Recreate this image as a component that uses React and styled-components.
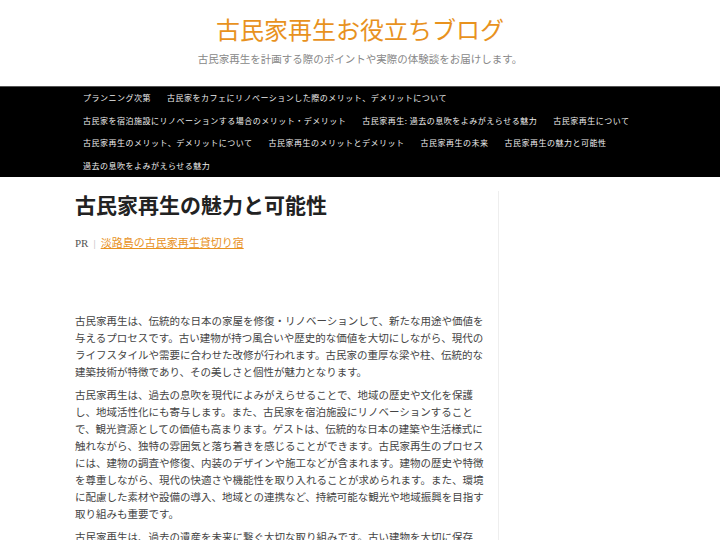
import React from 'react';
import styled, { createGlobalStyle } from 'styled-components';

const GlobalStyle = createGlobalStyle`
  html, body {
    margin: 0;
    padding: 0;
    background: #fff;
  }
  body {
    font-family: "Noto Sans CJK JP", "Noto Sans", sans-serif;
    color: #444;
  }
`;

const Header = styled.header`
  text-align: center;
  padding: 14px 0 20px;
`;

const SiteTitle = styled.div`
  font-size: 24px;
  line-height: 30px;
  color: #e8921e;
`;

const Tagline = styled.div`
  margin-top: 8px;
  font-size: 10.5px;
  line-height: 14px;
  color: #888;
`;

const NavBar = styled.nav`
  background: #000;
  border-top: 1px solid #555;
`;

const NavList = styled.ul`
  list-style: none;
  margin: 0 auto;
  padding: 0;
  width: 570px;
  display: flex;
  flex-wrap: wrap;
`;

const NavItem = styled.li`
  padding: 0 8px;
  font-size: 8px;
  letter-spacing: 0.5px;
  line-height: 22.5px;
  color: #eee;
  white-space: nowrap;
`;

const Main = styled.div`
  width: 570px;
  margin: 0 auto;
  padding-top: 14px;
  display: flex;
  align-items: stretch;
`;

const Article = styled.article`
  width: 410px;
  margin-right: 13px;
`;

const Sidebar = styled.aside`
  flex: 1;
  border-left: 1px solid #eee;
  min-height: 400px;
`;

const Title = styled.h1`
  margin: 0;
  font-size: 21px;
  line-height: 27px;
  font-weight: bold;
  color: #222;
`;

const PrLine = styled.div`
  margin-top: 16px;
  font-size: 11px;
  line-height: 16px;
  color: #555;
  font-family: "Liberation Serif", "Noto Sans CJK JP", serif;
`;

const Sep = styled.span`
  color: #bbb;
  margin: 0 5px;
`;

const PrLink = styled.a`
  color: #e8921e;
  text-decoration: underline;
  font-family: "Noto Sans CJK JP", sans-serif;
`;

const AdSpace = styled.div`
  height: 61px;
`;

const Para = styled.p`
  margin: 0 0 6px;
  font-size: 10.5px;
  line-height: 17px;
  color: #444;
`;

const navItems = [
  'プランニング次第',
  '古民家をカフェにリノベーションした際のメリット、デメリットについて',
  '古民家を宿泊施設にリノベーションする場合のメリット・デメリット',
  '古民家再生: 過去の息吹をよみがえらせる魅力',
  '古民家再生について',
  '古民家再生のメリット、デメリットについて',
  '古民家再生のメリットとデメリット',
  '古民家再生の未来',
  '古民家再生の魅力と可能性',
  '過去の息吹をよみがえらせる魅力',
];

const paragraphs = [
  '古民家再生は、伝統的な日本の家屋を修復・リノベーションして、新たな用途や価値を与えるプロセスです。古い建物が持つ風合いや歴史的な価値を大切にしながら、現代のライフスタイルや需要に合わせた改修が行われます。古民家の重厚な梁や柱、伝統的な建築技術が特徴であり、その美しさと個性が魅力となります。',
  '古民家再生は、過去の息吹を現代によみがえらせることで、地域の歴史や文化を保護し、地域活性化にも寄与します。また、古民家を宿泊施設にリノベーションすることで、観光資源としての価値も高まります。ゲストは、伝統的な日本の建築や生活様式に触れながら、独特の雰囲気と落ち着きを感じることができます。古民家再生のプロセスには、建物の調査や修復、内装のデザインや施工などが含まれます。建物の歴史や特徴を尊重しながら、現代の快適さや機能性を取り入れることが求められます。また、環境に配慮した素材や設備の導入、地域との連携など、持続可能な観光や地域振興を目指す取り組みも重要です。',
  '古民家再生は、過去の遺産を未来に繋ぐ大切な取り組みです。古い建物を大切に保存し、その魅力を次の世代へと伝えていくことが私たちの使命です。',
];

export default function App() {
  return (
    <>
      <GlobalStyle />
      <Header>
        <SiteTitle>古民家再生お役立ちブログ</SiteTitle>
        <Tagline>古民家再生を計画する際のポイントや実際の体験談をお届けします。</Tagline>
      </Header>
      <NavBar>
        <NavList>
          {navItems.map((item) => (
            <NavItem key={item}>{item}</NavItem>
          ))}
        </NavList>
      </NavBar>
      <Main>
        <Article>
          <Title>古民家再生の魅力と可能性</Title>
          <PrLine>
            PR<Sep>|</Sep>
            <PrLink href="#">淡路島の古民家再生貸切り宿</PrLink>
          </PrLine>
          <AdSpace />
          {paragraphs.map((p, i) => (
            <Para key={i}>{p}</Para>
          ))}
        </Article>
        <Sidebar />
      </Main>
    </>
  );
}
